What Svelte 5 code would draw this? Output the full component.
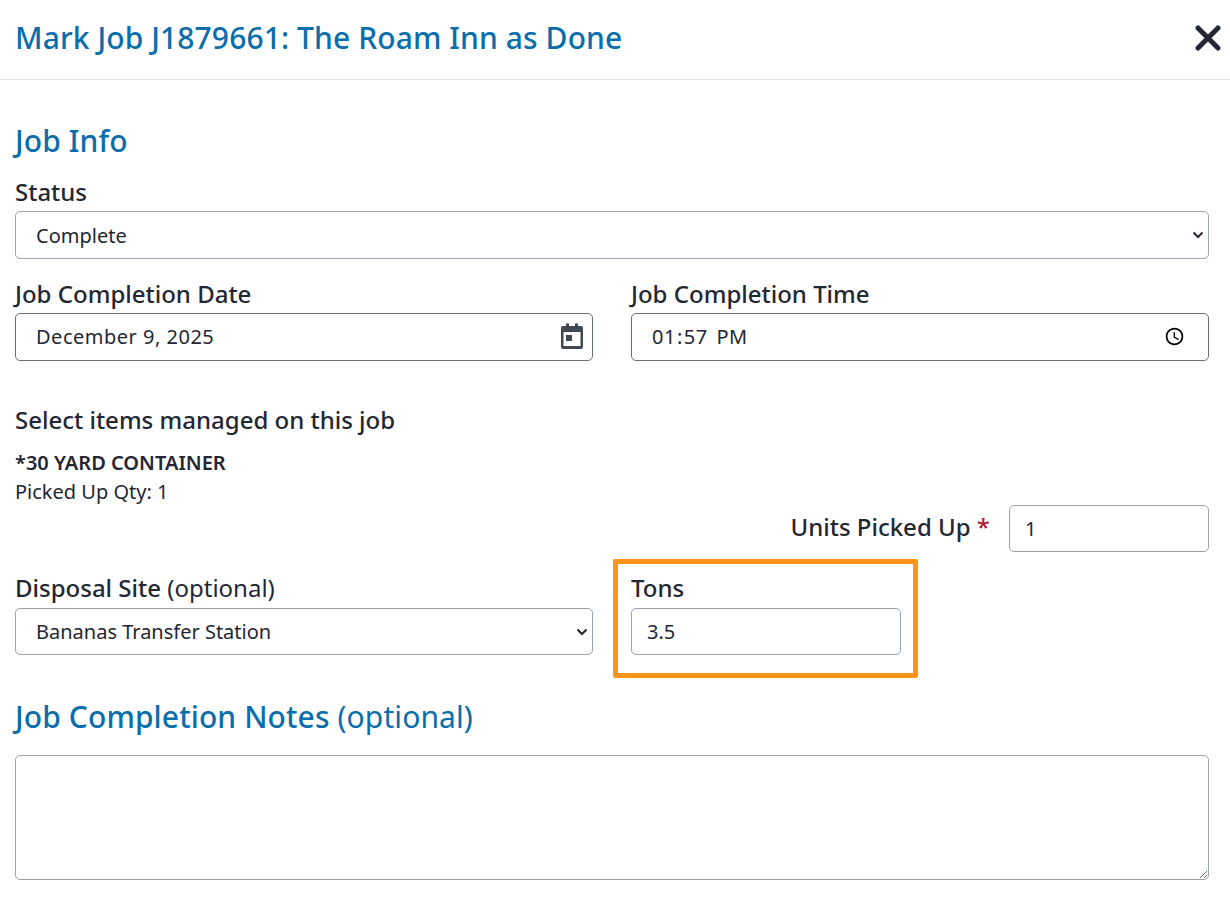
<script>
  let status = $state("complete");
  let site = $state("bananas");
  let notes = $state("");
</script>

<div class="modal">
  <header class="modal-header">
    <h1>Mark Job J1879661: The Roam Inn as Done</h1>
    <button type="button" class="close" aria-label="Close">
      <svg viewBox="0 0 26 26" width="26" height="26" fill="none" stroke="#232733" stroke-width="5" stroke-linecap="round">
        <path d="M3 3 L23 23 M23 3 L3 23"></path>
      </svg>
    </button>
  </header>

  <div class="modal-body">
    <h2 class="job-info">Job Info</h2>

    <label class="field status">
      <span class="label">Status</span>
      <select bind:value={status}>
        <option value="complete">Complete</option>
        <option value="incomplete">Incomplete</option>
      </select>
    </label>

    <div class="two-col times">
      <label class="field">
        <span class="label">Job Completion Date</span>
        <span class="date-wrap">
          <input class="dark date" type="text" value="December 9, 2025" />
          <svg class="cal" viewBox="0 0 24 26" width="24" height="26" fill="#424953">
            <path d="M3 3h3V0.5h3V3h6V0.5h3V3h3a2 2 0 0 1 2 2v19a2 2 0 0 1-2 2H3a2 2 0 0 1-2-2V5a2 2 0 0 1 2-2zM3.500 9v14h17V9z"></path>
            <rect x="6" y="12" width="6" height="6"></rect>
          </svg>
        </span>
      </label>
      <label class="field">
        <span class="label">Job Completion Time</span>
        <input class="dark date time" type="time" value="13:57" />
      </label>
    </div>

    <h3 class="items-title">Select items managed on this job</h3>
    <div class="item-name">*30 YARD CONTAINER</div>
    <div class="item-qty">Picked Up Qty: 1</div>

    <div class="units">
      <label for="units">Units Picked Up <span class="req">*</span></label>
      <input id="units" type="text" value="1" />
    </div>

    <div class="two-col disposal">
      <label class="field">
        <span class="label">Disposal Site <span class="opt">(optional)</span></span>
        <select bind:value={site}>
          <option value="bananas">Bananas Transfer Station</option>
        </select>
      </label>
      <div class="tons-col">
        <label class="field tons">
          <span class="label">Tons</span>
          <input type="text" value="3.5" />
        </label>
      </div>
    </div>

    <h2 class="notes-title">Job Completion Notes <span class="opt">(optional)</span></h2>
    <textarea bind:value={notes} aria-label="Job Completion Notes"></textarea>
  </div>
</div>

<style>
  :global(body) {
    background: #fff;
    color: #232733;
    font-family: "Noto Sans", "Open Sans", sans-serif;
  }

  .modal {
    width: 1230px;
    height: 910px;
    overflow: hidden;
  }

  .modal-header {
    display: flex;
    align-items: center;
    justify-content: space-between;
    height: 80px;
    padding: 0 9px 4px 15px;
    box-sizing: border-box;
    border-bottom: 1px solid #e3e5e8;
  }

  h1 {
    margin: 0;
    color: #0a6ead;
    font-size: 30px;
    font-weight: 500;
    letter-spacing: 0.1px;
    line-height: 38px;
  }

  .close {
    display: flex;
    padding: 0;
    border: none;
    background: none;
  }

  .modal-body {
    padding: 0 21px 0 15px;
  }

  h2 {
    margin: 0;
    color: #0a6ead;
    font-size: 30px;
    font-weight: 500;
    letter-spacing: 0.1px;
    line-height: 38px;
  }

  .job-info {
    margin-top: 42px;
  }

  .field {
    display: block;
  }

  .label {
    display: block;
    height: 34px;
    font-size: 24px;
    font-weight: 500;
    line-height: 30px;
  }

  .opt {
    font-weight: 400;
  }

  select,
  input,
  textarea {
    display: block;
    width: 100%;
    box-sizing: border-box;
    background-color: #fff;
    border: 1px solid #9aa5b1;
    border-radius: 5px;
    color: #232733;
    font-family: inherit;
    font-size: 20px;
    outline: none;
  }

  select {
    appearance: none;
    height: 48px;
    padding: 0 30px 0 20px;
    background-image: url("data:image/svg+xml,%3Csvg xmlns='http://www.w3.org/2000/svg' viewBox='0 0 12 8'%3E%3Cpath d='M1.500 1.500 6 6l4.500-4.500' fill='none' stroke='%23232733' stroke-width='2'/%3E%3C/svg%3E");
    background-repeat: no-repeat;
    background-position: right 4px center;
    background-size: 12px 8px;
  }

  input {
    height: 48px;
    padding: 0 20px;
  }

  input.dark {
    border-color: #686f7b;
  }

  input.date {
    padding-bottom: 2px;
    letter-spacing: 0.5px;
  }

  input.time {
    padding-left: 19px;
  }

  input.time::-webkit-datetime-edit-ampm-field {
    margin-left: 3px;
  }

  textarea {
    height: 125px;
    padding: 8px 16px;
  }

  .status {
    margin-top: 17px;
  }

  .two-col {
    display: grid;
    grid-template-columns: 578px 578px;
    gap: 38px;
  }

  .times {
    margin-top: 20px;
  }

  .date-wrap {
    display: block;
    position: relative;
  }

  .cal {
    position: absolute;
    top: 10px;
    right: 9px;
    pointer-events: none;
  }

  .items-title {
    margin: 43px 0 0;
    font-size: 24px;
    font-weight: 500;
    line-height: 32px;
  }

  .item-name {
    margin-top: 14px;
    font-size: 20px;
    font-weight: 600;
    line-height: 26px;
  }

  .item-qty {
    margin-top: 3px;
    font-size: 20px;
    line-height: 26px;
  }

  .units {
    display: flex;
    align-items: center;
    justify-content: flex-end;
    gap: 19px;
  }

  .units label {
    padding-bottom: 4px;
    font-size: 24px;
    font-weight: 500;
  }

  .units input {
    width: 200px;
    height: 47px;
    padding: 0 15px;
  }

  .req {
    color: #b01c2e;
  }

  .disposal {
    margin-top: 21px;
  }

  .disposal .label {
    height: 35px;
  }

  .disposal select,
  .disposal input {
    height: 47px;
  }

  .disposal input {
    padding: 0 15px;
  }

  .tons {
    position: relative;
    width: 270px;
  }

  .tons::after {
    content: "";
    position: absolute;
    inset: -14px -17px -23px -18px;
    border: 5px solid #ff9416;
    border-radius: 2px;
    pointer-events: none;
  }

  .notes-title {
    margin-top: 43px;
  }

  .notes-title + textarea {
    margin-top: 19px;
  }
</style>
